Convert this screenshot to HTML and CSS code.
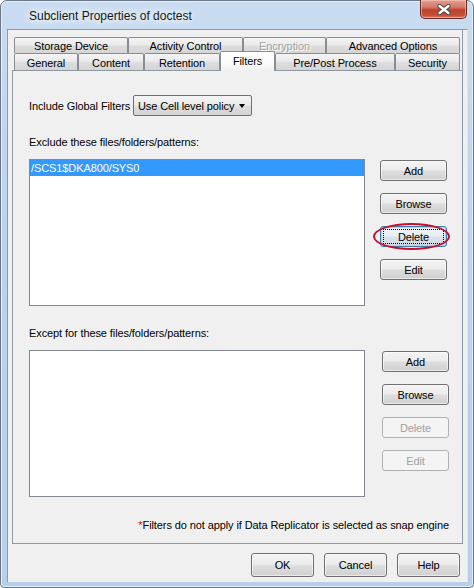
FILE: index.html
```html
<!DOCTYPE html>
<html>
<head>
<meta charset="utf-8">
<link rel="stylesheet" href="styles.css">
</head>
<body>
<div class="window">
  <div class="titlebar">
    <span class="title">Subclient Properties of doctest</span>
    <div class="close">
      <svg width="14" height="11" viewBox="0 0 14 11">
        <path d="M2.5 2 L11.5 9 M11.5 2 L2.5 9" stroke="#454545" stroke-width="4.2" stroke-linecap="round"/>
        <path d="M2.5 2 L11.5 9 M11.5 2 L2.5 9" stroke="#ffffff" stroke-width="2.4" stroke-linecap="round"/>
      </svg>
    </div>
  </div>
  <div class="client">
    <div class="tabpane">
      <div class="tabrow row1">
        <div class="tab w114">Storage Device</div>
        <div class="tab w115">Activity Control</div>
        <div class="tab w83 disabled">Encryption</div>
        <div class="tab w134">Advanced Options</div>
      </div>
      <div class="tabrow row2">
        <div class="tab w64">General</div>
        <div class="tab w66">Content</div>
        <div class="tab w76">Retention</div>
        <div class="tab w55 selected">Filters</div>
        <div class="tab w120">Pre/Post Process</div>
        <div class="tab w65">Security</div>
      </div>
      <div class="panel">
        <div class="filter-row">
          <span class="filter-label">Include Global Filters</span>
          <div class="combo">
            <span class="combo-text">Use Cell level policy</span>
            <span class="combo-arrow"></span>
          </div>
        </div>
        <div class="section-label first">Exclude these files/folders/patterns:</div>
        <div class="section">
          <div class="list">
            <div class="list-item selected">/SCS1$DKA800/SYS0</div>
          </div>
          <div class="btn-col">
            <div class="btn">Add</div>
            <div class="btn">Browse</div>
            <div class="btn-wrap">
              <div class="btn focused"><span class="focus-ring">Delete</span></div>
              <div class="highlight"></div>
            </div>
            <div class="btn">Edit</div>
          </div>
        </div>
        <div class="section-label">Except for these files/folders/patterns:</div>
        <div class="section">
          <div class="list"></div>
          <div class="btn-col second">
            <div class="btn">Add</div>
            <div class="btn">Browse</div>
            <div class="btn disabled">Delete</div>
            <div class="btn disabled">Edit</div>
          </div>
        </div>
        <div class="footnote"><span class="star">*</span>Filters do not apply if Data Replicator is selected as snap engine</div>
      </div>
    </div>
    <div class="dlg-buttons">
      <div class="btn dlg">OK</div>
      <div class="btn dlg">Cancel</div>
      <div class="btn dlg">Help</div>
    </div>
  </div>
</div>
</body>
</html>
```

FILE: styles.css
```css
html, body {
  margin: 0;
  padding: 0;
  background: #ffffff;
}

body {
  font-family: "Liberation Sans", Arial, sans-serif;
  font-size: 11px;
  letter-spacing: -0.1px;
  color: #000000;
}

.window {
  width: 474px;
  height: 588px;
  box-sizing: border-box;
  border: 1px solid #6b7786;
  border-radius: 7px 7px 4px 4px;
  padding: 0 6px 5px 6px;
  background: linear-gradient(to bottom, #c9dcf1 0%, #bcd3ec 40%, #b7cfe9 100%);
  box-shadow: inset 0 0 0 1px #e4eef9;
  display: flex;
  flex-direction: column;
}

.titlebar {
  height: 28px;
  flex: none;
  display: flex;
  justify-content: space-between;
  align-items: flex-start;
}

.title {
  align-self: center;
  margin-top: 2px;
  padding-left: 22px;
  font-size: 12px;
  letter-spacing: 0;
  color: #101820;
  text-shadow: 0 0 6px #ffffff, 0 0 10px #ffffff, 0 0 14px rgba(255,255,255,0.9);
}

.close {
  width: 47px;
  height: 19px;
  margin-top: -1px;
  box-sizing: border-box;
  border: 1px solid #6a2a24;
  border-top: none;
  border-radius: 0 0 5px 5px;
  background: linear-gradient(to bottom, #e3a090 0%, #d27a68 40%, #c0412c 55%, #c54f3a 85%, #d57e69 100%);
  box-shadow: inset 0 0 0 1px rgba(255,210,200,0.5);
  display: flex;
  align-items: center;
  justify-content: center;
}

.client {
  flex: 1;
  background: #f0f0f0;
  border-left: 1px solid #8e99a4;
  border-top: 1px solid #8e99a4;
  border-right: 1px solid #dde6ef;
  margin-right: -1px;
  display: flex;
  flex-direction: column;
}

.tabpane {
  width: 455px;
  height: 514px;
  box-sizing: border-box;
  padding: 7px 0 0 4px;
  border-right: 1px solid #8e99a4;
  display: flex;
  flex-direction: column;
}

.tabrow {
  display: flex;
  margin-left: 2px;
  flex: none;
}

.row1 {
  height: 16px;
}

.row2 {
  height: 17px;
  align-items: flex-end;
}

.tab {
  box-sizing: border-box;
  height: 100%;
  border: 1px solid #898c95;
  border-bottom: none;
  border-radius: 2px 2px 0 0;
  background: linear-gradient(to bottom, #f4f4f4 0%, #ebebeb 45%, #dddddd 55%, #d5d5d5 100%);
  display: flex;
  align-items: center;
  justify-content: center;
  line-height: 13px;
  white-space: nowrap;
  padding-top: 2px;
}

.tab.disabled {
  color: #a3a3a3;
  text-shadow: 1px 1px 0 #ffffff;
}

.tab.selected {
  height: 20px;
  margin-bottom: -1px;
  position: relative;
  z-index: 1;
  background: linear-gradient(to bottom, #ffffff 0%, #fbfbfb 60%, #f0f0f0 100%);
  align-items: flex-start;
  padding-top: 3px;
}

.w114 { width: 114px; }
.w115 { width: 115px; }
.w83 { width: 83px; }
.w134 { width: 134px; }
.w64 { width: 64px; }
.w66 { width: 66px; }
.w76 { width: 76px; }
.w55 { width: 55px; }
.w120 { width: 120px; }
.w65 { width: 65px; }

.panel {
  flex: 1;
  box-sizing: border-box;
  border: 1px solid #8e99a4;
  border-right: none;
  padding: 0 13px 11px 16px;
  display: flex;
  flex-direction: column;
}

.filter-row {
  margin-top: 24px;
  height: 21px;
  display: flex;
  align-items: center;
}

.filter-label {
  width: 104px;
  flex: none;
}

.combo {
  width: 119px;
  height: 21px;
  box-sizing: border-box;
  border: 1px solid #707070;
  border-radius: 2px;
  background: linear-gradient(to bottom, #f4f4f4 0%, #ececec 45%, #dedede 55%, #d3d3d3 100%);
  display: flex;
  align-items: center;
  padding-left: 4px;
  position: relative;
}

.combo-text {
  flex: 1;
  white-space: nowrap;
}

.combo-arrow {
  width: 0;
  height: 0;
  border-left: 3.5px solid transparent;
  border-right: 3.5px solid transparent;
  border-top: 4px solid #000000;
  margin-right: 6px;
  margin-top: 1px;
}

.section-label {
  margin-top: 20px;
  line-height: 14px;
  height: 14px;
  white-space: nowrap;
}

.section-label.first {
  margin-top: 19px;
}

.section {
  margin-top: 10px;
  display: flex;
  gap: 15px;
}

.list {
  width: 336px;
  height: 147px;
  box-sizing: border-box;
  border: 1px solid #828790;
  background: #ffffff;
}

.list-item {
  height: 16px;
  line-height: 16px;
  padding-left: 1px;
  white-space: nowrap;
}

.list-item.selected {
  background: #3399ff;
  color: #ffffff;
}

.btn-col {
  margin-top: 1px;
  display: flex;
  flex-direction: column;
  gap: 12px;
  width: 67px;
}

.btn-col.second {
  margin-left: 2px;
}

.btn-wrap {
  position: relative;
}

.btn {
  height: 21px;
  box-sizing: border-box;
  border: 1px solid #707070;
  border-radius: 3px;
  background: linear-gradient(to bottom, #f4f4f4 0%, #ececec 45%, #dddddd 55%, #d0d0d0 100%);
  box-shadow: inset 0 0 0 1px rgba(255,255,255,0.55);
  display: flex;
  align-items: center;
  justify-content: center;
  white-space: nowrap;
}

.btn.focused {
  border-color: #3c7fb1;
  background: linear-gradient(to bottom, #f2f7fb 0%, #e6eef5 45%, #d9e2ea 55%, #cfd8e0 100%);
  box-shadow: inset 0 0 0 1px #a8d2f0;
  padding: 2px;
}

.focus-ring {
  flex: 1;
  align-self: stretch;
  display: flex;
  align-items: center;
  justify-content: center;
  border: 1px dotted #000000;
}

.btn.disabled {
  border-color: #adb2b5;
  background: #f4f4f4;
  box-shadow: none;
  color: #a0a0a0;
}

.highlight {
  position: absolute;
  left: -7px;
  top: -3px;
  width: 77px;
  height: 27px;
  box-sizing: border-box;
  border: 2px solid #c8102e;
  border-radius: 50%;
  pointer-events: none;
}

.footnote {
  margin-top: auto;
  line-height: 14px;
  text-align: right;
  white-space: nowrap;
}

.star {
  color: #ff0000;
}

.dlg-buttons {
  margin-top: 9px;
  padding-right: 7px;
  display: flex;
  justify-content: flex-end;
  gap: 10px;
}

.btn.dlg {
  width: 63px;
  height: 24px;
}
```
